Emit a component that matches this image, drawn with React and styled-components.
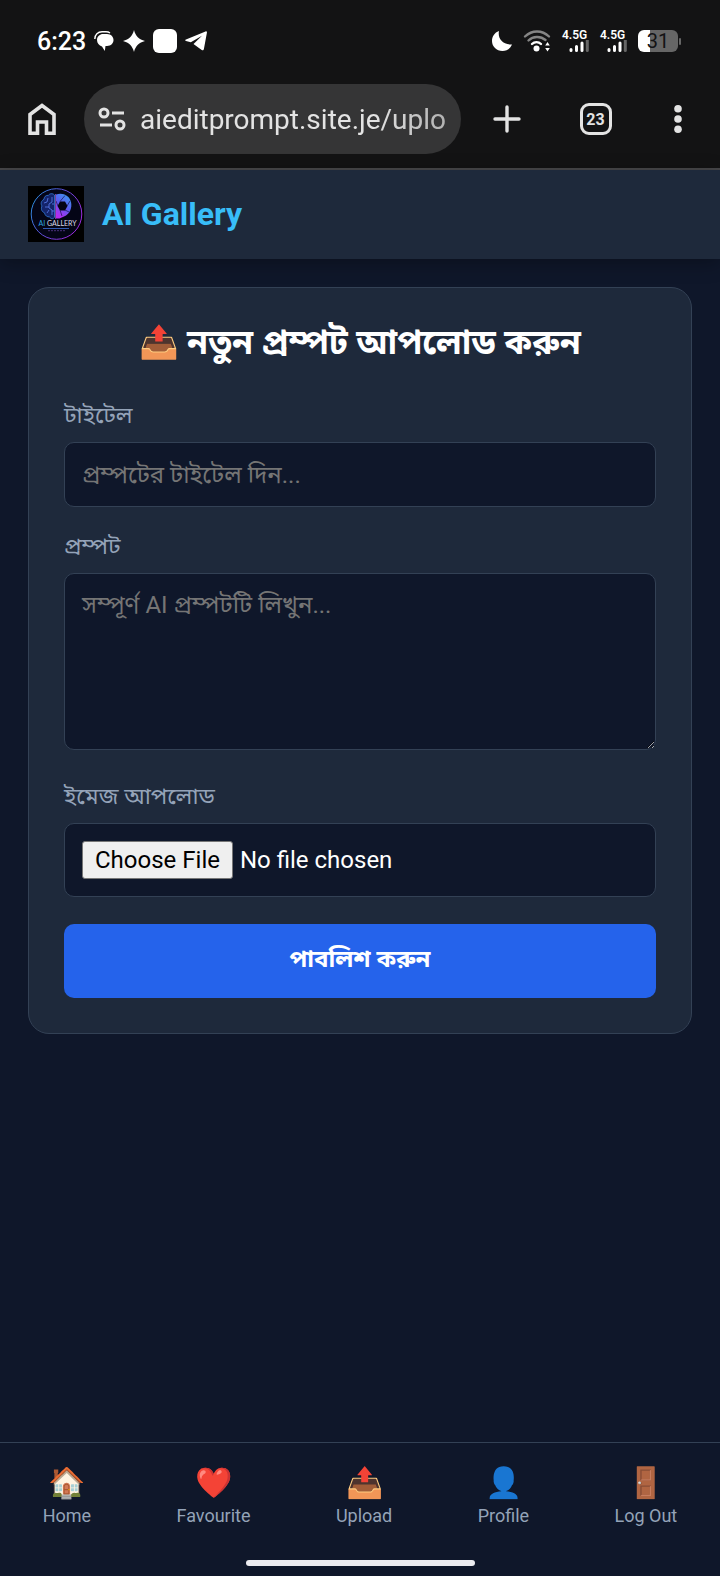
import React from 'react';
import styled, { createGlobalStyle } from 'styled-components';

const GlobalStyle = createGlobalStyle`
  *, *::before, *::after {
    box-sizing: border-box;
  }

  body {
    margin: 0;
    background: #0f172a;
    color: #fff;
    font-family: Roboto, 'Noto Sans Bengali', 'Noto Sans', sans-serif;
  }

  button, input, textarea {
    font-family: inherit;
  }
`;

const Screen = styled.div`
  display: flex;
  flex-direction: column;
  min-height: 100vh;
`;

const StatusBar = styled.div`
  display: flex;
  align-items: center;
  justify-content: space-between;
  height: 82px;
  padding: 0 39px 0 37px;
  background: #131314;
`;

const StatusGroup = styled.div`
  display: flex;
  align-items: center;
  gap: ${({ $gap }) => $gap}px;
`;

const Clock = styled.span`
  font-size: 25px;
  font-weight: 500;
`;

const Toolbar = styled.div`
  display: flex;
  align-items: center;
  height: 88px;
  padding: 0 34px 12px 28px;
  border-bottom: 2px solid #47474a;
  background: #131314;
`;

const ToolButton = styled.button`
  display: flex;
  padding: 0;
  border: 0;
  background: none;
  color: #e3e3e3;
`;

const AddressBar = styled.label`
  display: flex;
  flex: 1;
  align-items: center;
  gap: 14px;
  min-width: 0;
  height: 70px;
  margin-left: 28px;
  padding: 0 12px 0 14px;
  border-radius: 35px;
  background: #353536;
`;

const AddressInput = styled.input`
  flex: 1;
  min-width: 0;
  padding: 0;
  border: 0;
  outline: 0;
  background: none;
  color: #e3e3e3;
  font-size: 28px;
  mask-image: linear-gradient(to right, #000 76%, rgba(0, 0, 0, 0.7));
`;

const ToolActions = styled.div`
  display: flex;
  align-items: center;
  justify-content: space-between;
  width: 193px;
  margin-left: 32px;
`;

const AppHeader = styled.header`
  display: flex;
  align-items: center;
  gap: 18px;
  padding: 16px 28px 17px;
  background: #1e293b;
  box-shadow: 0 4px 18px rgba(0, 0, 0, 0.3);
`;

const Brand = styled.h1`
  margin: 0;
  color: #38bdf8;
  font-size: 32px;
  font-weight: 700;
  line-height: 56px;
`;

const Card = styled.form`
  display: flex;
  flex-direction: column;
  margin: 28px;
  padding: 35px;
  border: 1px solid #334155;
  border-radius: 21px;
  background: #1e293b;
`;

const CardTitle = styled.h2`
  display: flex;
  align-items: center;
  justify-content: center;
  gap: 8px;
  margin: 0 0 39px;
  color: #fff;
  font-size: 34px;
  font-weight: 700;
  line-height: 38px;
`;

const TitleIcon = styled.span`
  font-size: 32px;
`;

const Field = styled.div`
  display: flex;
  flex-direction: column;
  margin-bottom: ${({ $space = 24 }) => $space}px;
`;

const FieldLabel = styled.label`
  margin-bottom: 10px;
  color: #94a3b8;
  font-size: 23px;
  line-height: 32px;
`;

const TextInput = styled.input`
  width: 100%;
  height: ${({ type }) => (type === 'file' ? 74 : 65)}px;
  padding: 17px;
  border: 1px solid #334155;
  border-radius: 10px;
  background: #0f172a;
  color: #fff;
  font-size: 24px;

  &::placeholder {
    color: #757575;
  }

  &::file-selector-button {
    height: 38px;
    margin-right: 7px;
    padding: 0 12px;
    border: 1px solid #767676;
    border-radius: 3px;
    background: #efefef;
    color: #000;
    font: inherit;
  }
`;

const TextArea = styled.textarea`
  display: block;
  width: 100%;
  height: 177px;
  padding: 17px;
  border: 1px solid #334155;
  border-radius: 10px;
  background: #0f172a;
  color: #fff;
  font-size: 24px;
  line-height: 28px;
  resize: vertical;

  &::placeholder {
    color: #757575;
  }
`;

const PublishButton = styled.button`
  height: 74px;
  border: 0;
  border-radius: 10px;
  background: #2563eb;
  color: #fff;
  font-size: 24px;
  font-weight: 700;
`;

const BottomNav = styled.nav`
  display: flex;
  justify-content: space-around;
  margin-top: auto;
  padding: 19px 0 33px;
  border-top: 1px solid #334155;
  background: #0f172a;
`;

const NavLink = styled.a`
  display: flex;
  flex-direction: column;
  align-items: center;
  gap: 1px;
  color: #94a3b8;
  font-size: 18px;
  line-height: 22px;
  text-decoration: none;
`;

const NavIcon = styled.span`
  font-size: 30px;
  line-height: 42px;
`;

const HomeIndicator = styled.div`
  width: 229px;
  height: 6px;
  margin: 0 auto 10px;
  border-radius: 3px;
  background: #ececf0;
`;

const ChatIcon = () => (
  <svg width="21" height="20" viewBox="0 0 21 20" fill="#fff" aria-hidden="true">
    <path d="M9 3h4c4 0 6.500 2.800 6.500 6s-2.500 6-6.500 6h-1.500L10.800 20 8 15.500C5 14.500 3 12 3 9c0-3.500 3-6 6-6z" />
    <path d="M.8 8C.8 3.500 4 .8 8 .8h4c1.800 0 3 .4 4 1.200" fill="none" stroke="#fff" strokeWidth="1.400" />
  </svg>
);

const SparkIcon = () => (
  <svg width="22" height="22" viewBox="0 0 22 22" fill="#fff" aria-hidden="true">
    <path d="M11 0c1.500 6 5 9.500 11 11-6 1.500-9.500 5-11 11-1.500-6-5-9.500-11-11C6 9.500 9.500 6 11 0z" />
  </svg>
);

const SquareIcon = () => (
  <svg width="24" height="24" viewBox="0 0 24 24" aria-hidden="true">
    <rect width="24" height="24" rx="6" fill="#fff" />
  </svg>
);

const PlaneIcon = () => (
  <svg width="22" height="20" viewBox="0 0 22 20" fill="#fff" aria-hidden="true">
    <path d="M1 8.500 20.500.5c1-.4 1.600.2 1.400 1.200l-3 16.300c-.3 1.300-1.200 1.500-2.200.9L8.500 13 17 4.700 5.800 11.300 1 9.900c-1-.3-1-1 0-1.400z" />
  </svg>
);

const MoonIcon = () => (
  <svg width="20" height="20" viewBox="0 0 20 20" fill="#fff" aria-hidden="true">
    <path d="M7 0C5.500 7 10 14 20 13.500 18 18 14.500 20 10.500 20 4.500 20 0 15.500 0 10 0 5.500 2.500 1.500 7 0z" />
  </svg>
);

const WifiIcon = () => (
  <svg width="28" height="22" viewBox="0 0 28 22" fill="none" strokeWidth="2.400" strokeLinecap="round" aria-hidden="true">
    <path d="M2 6.500C9-.2 19-.2 26 6.500M5.500 10.500c4.500-4.500 12-4.800 17-.5" stroke="#858585" />
    <path d="M9 14c2.500-2.500 6.500-2.500 9 0" stroke="#fff" />
    <circle cx="13.500" cy="18.500" r="3" fill="#fff" />
    <path d="M24.500 12l2.300 3.500h-4.600zM24.500 21.500l2.300-3.500h-4.600z" fill="#fff" />
  </svg>
);

const Signal = styled.span`
  display: flex;
  flex-direction: column;
  width: 27px;
  font-size: 12px;
  font-weight: 600;
  line-height: 10px;

  svg {
    align-self: flex-end;
  }
`;

const SignalIcon = () => (
  <Signal>
    <span>4.5G</span>
    <svg width="20" height="13" viewBox="0 0 20 13" strokeWidth="3" strokeLinecap="round" aria-hidden="true">
      <path d="M2 9.500v1M7.500 6.500v4M13 3v7.500" stroke="#fff" />
      <path d="M18.300 0v10.500" stroke="#666" />
    </svg>
  </Signal>
);

const Battery = styled.span`
  display: flex;
  align-items: center;
  gap: 1px;

  &::after {
    content: '';
    width: 2px;
    height: 7px;
    border-radius: 1px;
    background: #666;
  }
`;

const BatteryLevel = styled.span`
  width: 40px;
  height: 22px;
  border-radius: 6px;
  background: linear-gradient(to right, #fff 31%, #666 31%);
  color: #131314;
  font-size: 20px;
  line-height: 23px;
  text-align: center;
`;

const HouseIcon = () => (
  <svg width="28" height="32" viewBox="0 0 28 32" fill="none" stroke="currentColor" strokeWidth="3.600" aria-hidden="true">
    <path d="M2 11.500 14 2.500l12 9v18.700h-7.500V19h-9v11.200H2z" />
  </svg>
);

const TuneIcon = () => (
  <svg width="28" height="24" viewBox="0 0 28 24" fill="none" stroke="#e3e3e3" strokeWidth="3" aria-hidden="true">
    <circle cx="6" cy="6" r="4" />
    <circle cx="22" cy="18" r="4" />
    <path d="M14 6h12M2 18h12" />
  </svg>
);

const PlusIcon = () => (
  <svg width="28" height="28" viewBox="0 0 28 28" stroke="currentColor" strokeWidth="3.400" strokeLinecap="round" aria-hidden="true">
    <path d="M14 2v24M2 14h24" />
  </svg>
);

const DotsIcon = () => (
  <svg width="16" height="28" viewBox="0 0 16 28" fill="currentColor" aria-hidden="true">
    <circle cx="8" cy="3.800" r="3.800" />
    <circle cx="8" cy="14" r="3.800" />
    <circle cx="8" cy="24.200" r="3.800" />
  </svg>
);

const TabCount = styled(ToolButton)`
  align-items: center;
  justify-content: center;
  width: 32px;
  height: 32px;
  border: 3px solid #e3e3e3;
  border-radius: 9px;
  font-size: 16px;
  font-weight: 700;
`;

const Logo = () => (
  <svg width="56" height="56" viewBox="0 0 56 56" role="img" aria-label="AI Gallery logo">
    <defs>
      <linearGradient id="ring" x1="0" y1="0" x2="1" y2="0.500">
        <stop offset="0" stopColor="#1f9fe0" />
        <stop offset="0.500" stopColor="#5a50d8" />
        <stop offset="1" stopColor="#9b2be0" />
      </linearGradient>
      <linearGradient id="lens" x1="0.800" y1="0" x2="0.300" y2="1">
        <stop offset="0" stopColor="#3b9bf0" />
        <stop offset="0.500" stopColor="#5b5cf0" />
        <stop offset="1" stopColor="#b62af0" />
      </linearGradient>
    </defs>
    <rect width="56" height="56" fill="#000" />
    <circle cx="28.500" cy="28" r="25.300" fill="#040516" stroke="url(#ring)" />
    <path
      d="M26.500 9c-2-2-5-1.500-6 .3-3-.3-4.500 2-4.500 4-3 1.500-3.500 4.500-2 6.700-1.500 3 0 6 2.500 6.800.5 3 3 4.500 5 4 1 2.200 4 2.500 5 .5z"
      fill="#14246b"
      stroke="#2f6fc8"
      strokeWidth="0.900"
    />
    <path
      d="M24 11v5l-3 2v4l3 2v5M20 12l-1 4-3 1M17 21h4M19 27l2-3M24 18h2M24 25h2"
      fill="none"
      stroke="#5a7df0"
      strokeWidth="0.800"
    />
    <path
      d="M28 8.500c6-2.500 13.500.5 15 7.500 1.300 6-1 12-7 14.500l-4.500 2H28zM32 15.500l-2.500 4.500 2.500 4.500h5l2.500-4.500-2.500-4.500z"
      fill="url(#lens)"
      fillRule="evenodd"
    />
    <path d="M32 15.500l5-6M39 20l3-5M37 24l4 2M32 24l2 6M30 20l-2-5" stroke="#15164a" strokeWidth="0.700" />
    <path d="M27.500 8v25" stroke="#c46be8" strokeWidth="0.600" />
    <text x="10.500" y="39.500" fill="#2fa8e0" fontSize="7" fontFamily="Lato, sans-serif">
      AI <tspan fill="#dcdce8">GALLERY</tspan>
    </text>
    <path d="M15 42.500h26" stroke="#3d6fd8" strokeWidth="0.800" />
    <path d="M20 44.700h17" stroke="#7a4fc0" strokeWidth="0.600" strokeDasharray="2 1" />
  </svg>
);

const navItems = [
  { icon: '🏠', label: 'Home' },
  { icon: '❤️', label: 'Favourite' },
  { icon: '📤', label: 'Upload' },
  { icon: '👤', label: 'Profile' },
  { icon: '🚪', label: 'Log Out' },
];

const App = () => (
  <Screen>
    <GlobalStyle />
    <StatusBar>
      <StatusGroup $gap={8}>
        <Clock>6:23</Clock>
        <ChatIcon />
        <SparkIcon />
        <SquareIcon />
        <PlaneIcon />
      </StatusGroup>
      <StatusGroup $gap={11}>
        <MoonIcon />
        <WifiIcon />
        <SignalIcon />
        <SignalIcon />
        <Battery>
          <BatteryLevel>31</BatteryLevel>
        </Battery>
      </StatusGroup>
    </StatusBar>
    <Toolbar>
      <ToolButton type="button" aria-label="Home page">
        <HouseIcon />
      </ToolButton>
      <AddressBar>
        <TuneIcon />
        <AddressInput type="text" aria-label="Address" defaultValue="aieditprompt.site.je/uplo" />
      </AddressBar>
      <ToolActions>
        <ToolButton type="button" aria-label="New tab">
          <PlusIcon />
        </ToolButton>
        <TabCount type="button">23</TabCount>
        <ToolButton type="button" aria-label="Menu">
          <DotsIcon />
        </ToolButton>
      </ToolActions>
    </Toolbar>
    <AppHeader>
      <Logo />
      <Brand>AI Gallery</Brand>
    </AppHeader>
    <main>
      <Card onSubmit={e => e.preventDefault()}>
        <CardTitle>
          <TitleIcon>📤</TitleIcon>
          <span>নতুন প্রম্পট আপলোড করুন</span>
        </CardTitle>
        <Field>
          <FieldLabel htmlFor="title">টাইটেল</FieldLabel>
          <TextInput id="title" type="text" placeholder="প্রম্পটের টাইটেল দিন..." />
        </Field>
        <Field $space={31}>
          <FieldLabel htmlFor="prompt">প্রম্পট</FieldLabel>
          <TextArea id="prompt" placeholder="সম্পূর্ণ AI প্রম্পটটি লিখুন..." />
        </Field>
        <Field $space={27}>
          <FieldLabel htmlFor="image">ইমেজ আপলোড</FieldLabel>
          <TextInput id="image" type="file" />
        </Field>
        <PublishButton type="submit">পাবলিশ করুন</PublishButton>
      </Card>
    </main>
    <BottomNav>
      {navItems.map(({ icon, label }) => (
        <NavLink key={label} href="#">
          <NavIcon>{icon}</NavIcon>
          {label}
        </NavLink>
      ))}
    </BottomNav>
    <HomeIndicator />
  </Screen>
);

export default App;
